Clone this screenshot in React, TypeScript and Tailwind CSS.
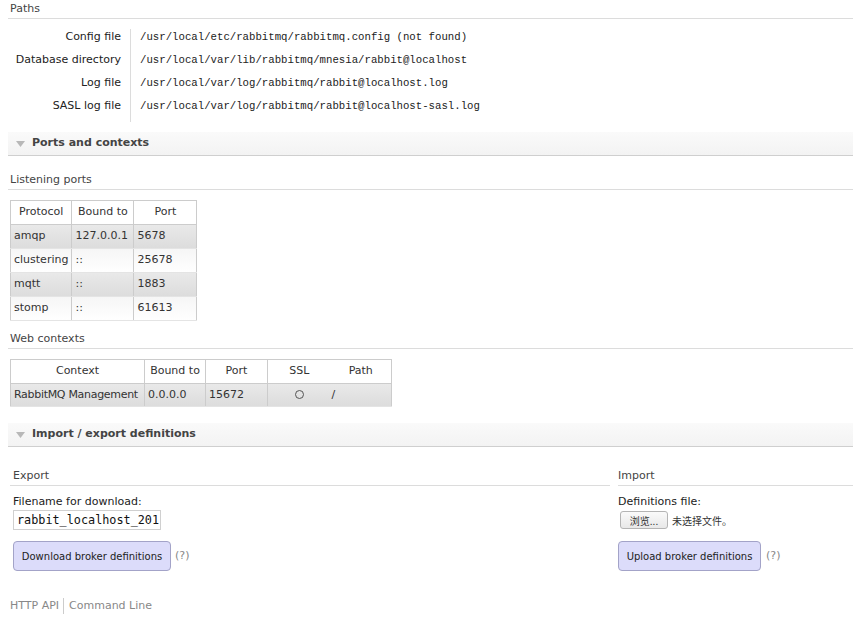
import React from "react";

const sans = { fontFamily: '"DejaVu Sans", Verdana, "Noto Sans CJK SC", sans-serif' };
const mono = { fontFamily: '"Liberation Mono", "Courier New", monospace' };

function SectionBar({ title }: { title: string }) {
  return (
    <div className="ml-[8px] h-[24px] flex items-center bg-gradient-to-b from-[#fafafa] to-[#f3f3f3] border-b border-[#cfcfcf]">
      <svg width="9" height="6" viewBox="0 0 9 6" className="ml-[8px] mr-[7px]">
        <polygon points="0,0 9,0 4.5,6" fill="#b8b8b8" />
      </svg>
      <span className="font-bold text-[11px] text-[#444]">{title}</span>
    </div>
  );
}

function SubHeader({ title }: { title: string }) {
  return (
    <div className="ml-[8px] pl-[2px] text-[11px] text-[#444] border-b border-[#dcdcdc] pb-[2px] leading-[14px]">{title}</div>
  );
}

const grayRow = "bg-gradient-to-b from-[#e9e9e9] to-[#dcdcdc]";
const whiteRow = "bg-gradient-to-b from-[#f6f6f6] to-[#ffffff]";

export default function App() {
  const paths = [
    ["Config file", "/usr/local/etc/rabbitmq/rabbitmq.config (not found)"],
    ["Database directory", "/usr/local/var/lib/rabbitmq/mnesia/rabbit@localhost"],
    ["Log file", "/usr/local/var/log/rabbitmq/rabbit@localhost.log"],
    ["SASL log file", "/usr/local/var/log/rabbitmq/rabbit@localhost-sasl.log"],
  ];
  const ports = [
    ["amqp", "127.0.0.1", "5678"],
    ["clustering", "::", "25678"],
    ["mqtt", "::", "1883"],
    ["stomp", "::", "61613"],
  ];
  const td = "border-x border-[#ccc] border-b border-b-[#e4e4e4] px-[3px] text-left whitespace-nowrap";
  return (
    <div className="w-[853px] h-[641px] bg-white text-[#333] overflow-hidden" style={sans}>
      <div className="pt-[2px]">
        <SubHeader title="Paths" />
      </div>
      <div className="flex ml-[8px] mt-[10px]">
        <div className="w-[122px] flex flex-col items-end pr-[9px] pt-[1px]">
          {paths.map(([l]) => (
            <div key={l} className="h-[23px] text-[11px] leading-[14px] text-[#222]">{l}</div>
          ))}
        </div>
        <div className="border-l border-[#dcdcdc] pl-[9px] pt-[1px]">
          {paths.map(([l, v]) => (
            <div key={l} className="h-[23px] text-[10.7px] leading-[14px] text-[#222]" style={mono}>{v}</div>
          ))}
        </div>
      </div>

      <div className="mt-[10px]">
        <SectionBar title="Ports and contexts" />
      </div>

      <div className="mt-[17px]">
        <SubHeader title="Listening ports" />
      </div>
      <table className="ml-[10px] mt-[10px] border-collapse text-[11px] text-[#333]">
        <thead>
          <tr className="h-[24px] bg-white">
            <th className="w-[61px] border border-[#ccc] font-normal text-center">Protocol</th>
            <th className="w-[62px] border border-[#ccc] font-normal text-center">Bound to</th>
            <th className="w-[63px] border border-[#ccc] font-normal text-center">Port</th>
          </tr>
        </thead>
        <tbody>
          {ports.map((r, i) => (
            <tr key={r[0]} className={`h-[24px] ${i % 2 === 0 ? grayRow : whiteRow}`}>
              {r.map((c, j) => (
                <td key={j} className={td}>{c}</td>
              ))}
            </tr>
          ))}
        </tbody>
      </table>

      <div className="mt-[11px]">
        <SubHeader title="Web contexts" />
      </div>
      <table className="ml-[10px] mt-[10px] border-collapse text-[11px] text-[#333] table-fixed w-[381px]">
        <thead>
          <tr className="h-[24px] bg-white">
            <th className="w-[134px] border border-[#ccc] font-normal text-center">Context</th>
            <th className="w-[61px] border border-[#ccc] font-normal text-center">Bound to</th>
            <th className="w-[62px] border border-[#ccc] font-normal text-center">Port</th>
            <th className="w-[63px] border-y border-l border-[#ccc] font-normal text-center">SSL</th>
            <th className="w-[61px] border-y border-r border-[#ccc] font-normal text-center">Path</th>
          </tr>
        </thead>
        <tbody>
          <tr className={`h-[23px] ${grayRow}`}>
            <td className={`${td} tracking-[-0.3px] overflow-visible`}>RabbitMQ Management</td>
            <td className={td}>0.0.0.0</td>
            <td className={td}>15672</td>
            <td className="border-l border-[#ccc] border-b border-b-[#e4e4e4] text-center">
              <span className="inline-block w-[9px] h-[9px] rounded-full border border-[#555] align-middle" />
            </td>
            <td className="border-r border-[#ccc] border-b border-b-[#e4e4e4] pl-[1px]">/</td>
          </tr>
        </tbody>
      </table>

      <div className="mt-[16px]">
        <SectionBar title="Import / export definitions" />
      </div>

      <div className="flex mt-[22px]">
        <div className="w-[600px] ml-[10px]">
          <div className="pl-[3px] text-[11px] leading-[14px] text-[#444] border-b border-[#dcdcdc] pb-[2px]">Export</div>
          <div className="pl-[3px] mt-[9px] text-[11px] leading-[14px] text-[#222]">Filename for download:</div>
          <div className="ml-[3px] mt-[1px] w-[148px] h-[20px] border border-[#d0d0d0] overflow-hidden whitespace-nowrap text-[11.8px] leading-[18px] pl-[3px] text-[#111]" style={{ fontFamily: '"DejaVu Sans Mono", monospace' }}>
            rabbit_localhost_201
          </div>
          <div className="flex items-center ml-[3px] mt-[11px]">
            <div className="w-[158px] h-[30px] rounded-[4px] border border-[#a3a3c8] bg-[#dcdcfa] flex items-center justify-center text-[10px] text-[#222]">
              Download broker definitions
            </div>
            <span className="ml-[4px] text-[11px] text-[#888]">(?)</span>
          </div>
        </div>
        <div className="flex-1 ml-[8px]">
          <div className="text-[11px] leading-[14px] text-[#444] border-b border-[#dcdcdc] pb-[2px]">Import</div>
          <div className="mt-[9px] text-[11px] leading-[14px] text-[#222]">Definitions file:</div>
          <div className="flex items-center h-[20px] mt-[1px] ml-[2px]">
            <div className="w-[48px] h-[18px] rounded-[3px] border border-[#b4b4b4] bg-gradient-to-b from-[#fafafa] to-[#e8e8e8] text-[10px] flex items-center justify-center text-[#333]" style={{ fontFamily: '"Noto Sans CJK SC", "DejaVu Sans", sans-serif' }}>
              浏览...
            </div>
            <span className="ml-[4px] text-[10px] text-[#333]" style={{ fontFamily: '"Noto Sans CJK SC", sans-serif' }}>未选择文件。</span>
          </div>
          <div className="flex items-center mt-[11px]">
            <div className="w-[143px] h-[30px] rounded-[4px] border border-[#a3a3c8] bg-[#dcdcfa] flex items-center justify-center text-[10px] text-[#222]">
              Upload broker definitions
            </div>
            <span className="ml-[5px] text-[11px] text-[#888]">(?)</span>
          </div>
        </div>
      </div>

      <div className="flex items-center ml-[10px] mt-[27px] text-[11px] text-[#888]">
        <span className="pr-[4px]">HTTP API</span>
        <span className="border-l border-[#ccc] pl-[5px] leading-[16px]">Command Line</span>
      </div>
    </div>
  );
}
